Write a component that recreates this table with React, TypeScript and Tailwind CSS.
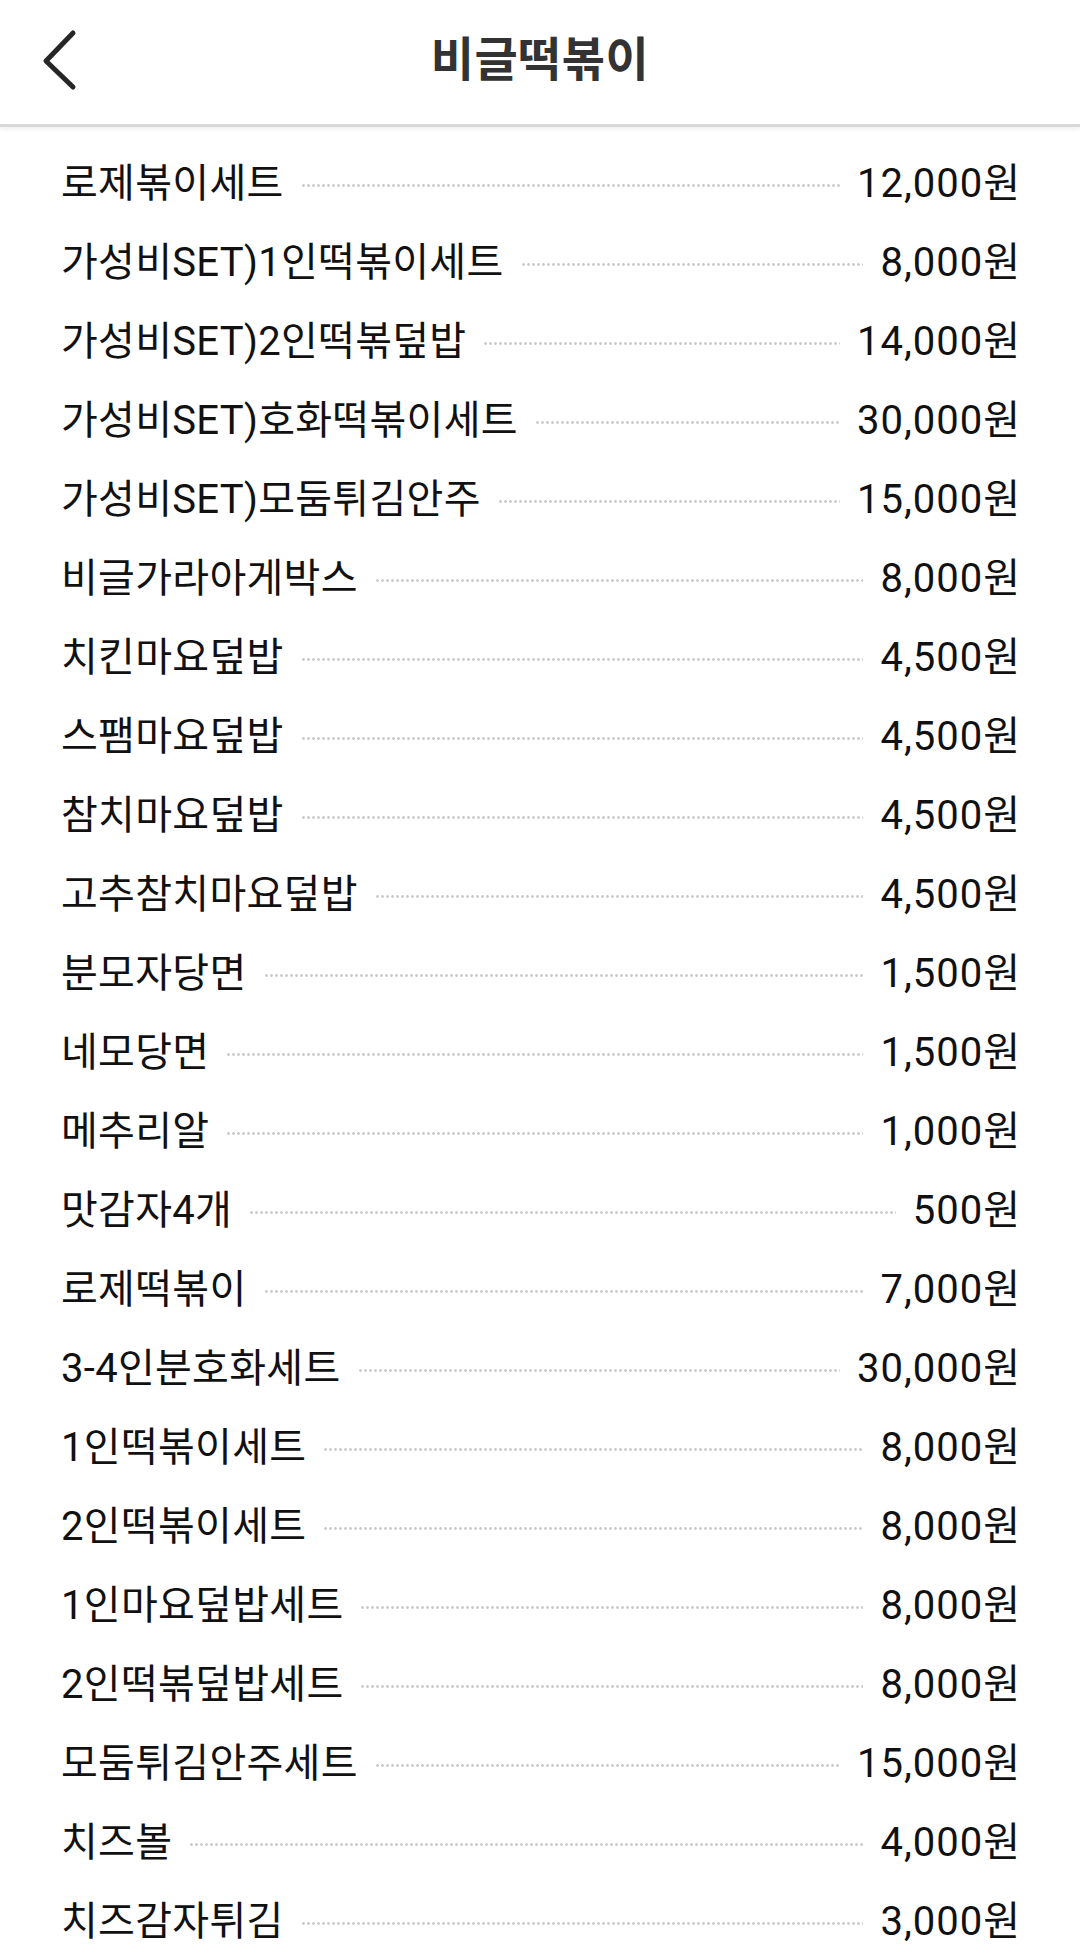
import React from "react";

interface MenuItem {
  name: string;
  price: string;
}

const menu: MenuItem[] = [
  { name: "로제볶이세트", price: "12,000원" },
  { name: "가성비SET)1인떡볶이세트", price: "8,000원" },
  { name: "가성비SET)2인떡볶덮밥", price: "14,000원" },
  { name: "가성비SET)호화떡볶이세트", price: "30,000원" },
  { name: "가성비SET)모둠튀김안주", price: "15,000원" },
  { name: "비글가라아게박스", price: "8,000원" },
  { name: "치킨마요덮밥", price: "4,500원" },
  { name: "스팸마요덮밥", price: "4,500원" },
  { name: "참치마요덮밥", price: "4,500원" },
  { name: "고추참치마요덮밥", price: "4,500원" },
  { name: "분모자당면", price: "1,500원" },
  { name: "네모당면", price: "1,500원" },
  { name: "메추리알", price: "1,000원" },
  { name: "맛감자4개", price: "500원" },
  { name: "로제떡볶이", price: "7,000원" },
  { name: "3-4인분호화세트", price: "30,000원" },
  { name: "1인떡볶이세트", price: "8,000원" },
  { name: "2인떡볶이세트", price: "8,000원" },
  { name: "1인마요덮밥세트", price: "8,000원" },
  { name: "2인떡볶덮밥세트", price: "8,000원" },
  { name: "모둠튀김안주세트", price: "15,000원" },
  { name: "치즈볼", price: "4,000원" },
  { name: "치즈감자튀김", price: "3,000원" },
];

export default function App() {
  return (
    <div className="w-[1080px] min-h-[1957px] bg-white font-['Roboto','Noto_Sans_CJK_KR',sans-serif]">
      <header className="relative h-[127px] flex items-center justify-center border-b-[3px] border-[#d9d9d9] shadow-[0_2px_4px_rgba(0,0,0,0.07)]">
        <button className="absolute left-[38px] top-[28px] w-[42px] h-[64px] flex items-center justify-center">
          <svg width="36" height="62" viewBox="0 0 36 62" fill="none">
            <polyline
              points="32,4 5,32 32,58"
              stroke="#262626"
              strokeWidth="5"
              strokeLinecap="round"
              strokeLinejoin="round"
            />
          </svg>
        </button>
        <h1 className="text-[47px] font-bold text-[#333] tracking-[0.5px] -mt-[4px]">
          비글떡볶이
        </h1>
      </header>

      <ul className="pt-[17px] pl-[61px] pr-[59px]">
        {menu.map((item, idx) => (
          <li key={idx} className="h-[79px] flex items-center text-[40px] text-[#111]">
            <span className="whitespace-nowrap tracking-[0.3px]">{item.name}</span>
            <span className="flex-1 mx-[17px] h-[3px] mt-[4px] bg-[radial-gradient(circle,#cdcdcd_1.2px,transparent_1.6px)] bg-[length:5px_3px] bg-repeat-x" />
            <span className="whitespace-nowrap tracking-[1px]">{item.price}</span>
          </li>
        ))}
      </ul>
    </div>
  );
}
